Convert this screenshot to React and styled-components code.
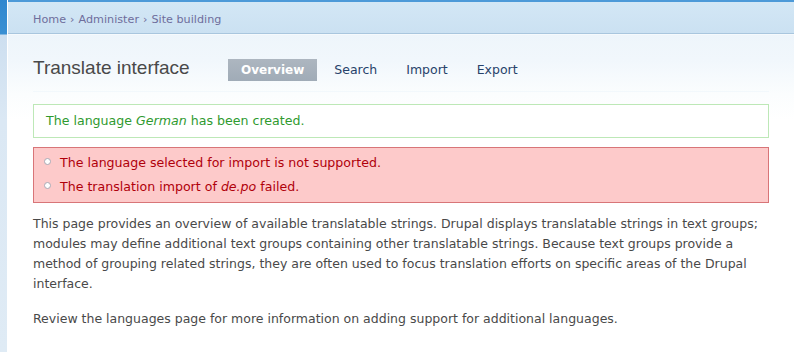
import React from "react";
import styled, { createGlobalStyle } from "styled-components";

const Global = createGlobalStyle`
  html, body { margin: 0; padding: 0; background: #fff; }
  body { font-family: "DejaVu Sans", Verdana, sans-serif; }
`;

const Page = styled.div`
  display: flex;
  width: 794px;
  min-height: 352px;
`;

const Rail = styled.div`
  width: 7px;
  flex: none;
  border-right: 1px solid #fff;
  background: linear-gradient(#2f87cf 0, #3a90d3 34px, #cddff0 35px, #dbe8f4 120px, #dfebf5 100%);
`;

const Main = styled.div`
  flex: 1;
  display: flex;
  flex-direction: column;
  background: linear-gradient(#eaf3fa 0, #f1f7fc 60px, #fbfdfe 95px, #fff 120px);
`;

const Breadcrumb = styled.div`
  height: 31px;
  border-top: 2px solid #4d9ad8;
  border-bottom: 1px solid #a9c6de;
  box-shadow: 0 1px 0 #f6fafd;
  background: linear-gradient(#d3e7f5, #cbe1f2);
  padding-left: 25px;
  font-size: 11.2px;
  line-height: 36px;
  color: #6e6e9c;
`;

const Crumb = styled.span``;

const Sep = styled.span`
  margin: 0 4px;
`;

const Body = styled.div`
  padding: 0 25px;
`;

const Heading = styled.div`
  display: flex;
  align-items: flex-end;
  height: 47px;
  padding-bottom: 10px;
  border-bottom: 1px solid #f2f8fc;
`;

const Title = styled.h2`
  margin: 0;
  width: 195px;
  font-family: "Liberation Sans", Arial, sans-serif;
  font-weight: normal;
  font-size: 19px;
  line-height: 22px;
  color: #494949;
  padding-bottom: 2px;
`;

const Tabs = styled.ul`
  display: flex;
  list-style: none;
  margin: 0;
  padding: 0;
  gap: 3px;
`;

const Tab = styled.li`
  height: 22px;
  line-height: 22px;
  padding: 0 13px;
  font-size: ${(p) => (p.$active ? "12px" : "12.5px")};
  font-weight: ${(p) => (p.$active ? "bold" : "normal")};
  color: ${(p) => (p.$active ? "#fff" : "#27426a")};
  background: ${(p) => (p.$active ? "linear-gradient(#adb6c0, #a0abb7)" : "transparent")};
  margin-right: ${(p) => (p.$active ? "1px" : "0")};
`;

const Message = styled.div`
  border: 1px solid ${(p) => (p.$type === "error" ? "#d87578" : "#bde8b7")};
  background: ${(p) => (p.$type === "error" ? "#fdcaca" : "#fff")};
  color: ${(p) => (p.$type === "error" ? "#b0000a" : "#2f9a2f")};
  font-size: 12.6px;
  line-height: 18px;
  padding: ${(p) => (p.$type === "error" ? "3px 12px 3px 9px" : "7px 12px")};
  margin-top: ${(p) => (p.$type === "error" ? "9px" : "12px")};
`;

const List = styled.ul`
  list-style: none;
  margin: 0;
  padding: 0;
`;

const Item = styled.li`
  position: relative;
  padding: 3px 0 3px 17px;
`;

const Bullet = styled.span`
  position: absolute;
  left: 1px;
  top: 7px;
  width: 5px;
  height: 5px;
  border-radius: 50%;
  background: #fff;
  border: 1px solid #a9a9b4;
`;

const Text = styled.p`
  margin: ${(p) => (p.$first ? "11px" : "15px")} 0 0;
  font-size: 12.5px;
  line-height: 20px;
  color: #494949;
`;

export default function App() {
  return (
    <>
      <Global />
      <Page>
        <Rail />
        <Main>
          <Breadcrumb>
            <Crumb>Home</Crumb>
            <Sep>›</Sep>
            <Crumb>Administer</Crumb>
            <Sep>›</Sep>
            <Crumb>Site building</Crumb>
          </Breadcrumb>
          <Body>
            <Heading>
              <Title>Translate interface</Title>
              <Tabs>
                <Tab $active>Overview</Tab>
                <Tab>Search</Tab>
                <Tab>Import</Tab>
                <Tab>Export</Tab>
              </Tabs>
            </Heading>
            <Message $type="status">
              The language <em>German</em> has been created.
            </Message>
            <Message $type="error">
              <List>
                <Item>
                  <Bullet />
                  The language selected for import is not supported.
                </Item>
                <Item>
                  <Bullet />
                  The translation import of <em>de.po</em> failed.
                </Item>
              </List>
            </Message>
            <Text $first>
              This page provides an overview of available translatable strings. Drupal displays translatable strings in text groups; modules may define additional text groups containing other translatable strings. Because text groups provide a method of grouping related strings, they are often used to focus translation efforts on specific areas of the Drupal interface.
            </Text>
            <Text>
              Review the languages page for more information on adding support for additional languages.
            </Text>
          </Body>
        </Main>
      </Page>
    </>
  );
}
